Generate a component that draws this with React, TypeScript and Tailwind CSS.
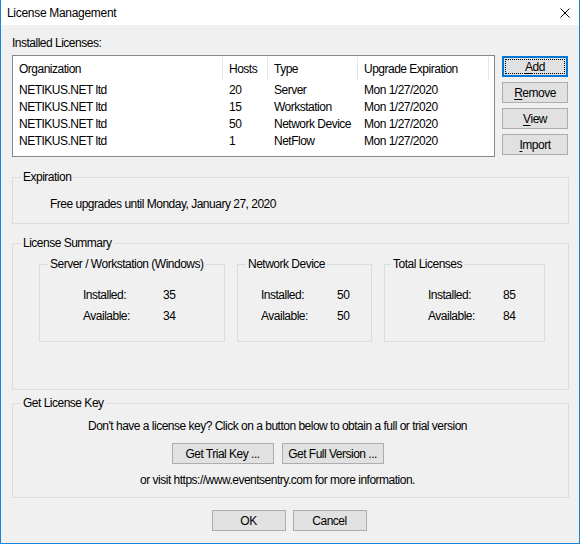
import type { ReactNode } from "react";

type BtnProps = {
  children: ReactNode;
  className?: string;
  focused?: boolean;
};

function Btn({ children, className = "", focused = false }: BtnProps) {
  if (focused) {
    return (
      <button className={`flex h-[21px] border-2 border-[#0078d7] bg-[#e1e1e1] p-px ${className}`}>
        <span className="flex flex-1 items-center justify-center border border-dotted border-black">{children}</span>
      </button>
    );
  }
  return (
    <button className={`flex h-[21px] items-center justify-center whitespace-nowrap border border-[#adadad] bg-[#e1e1e1] ${className}`}>
      {children}
    </button>
  );
}

function Key({ c }: { c: string }) {
  return <span className="underline decoration-1 underline-offset-2">{c}</span>;
}

const licenses = [
  { org: "NETIKUS.NET ltd", hosts: "20", type: "Server", exp: "Mon 1/27/2020" },
  { org: "NETIKUS.NET ltd", hosts: "15", type: "Workstation", exp: "Mon 1/27/2020" },
  { org: "NETIKUS.NET ltd", hosts: "50", type: "Network Device", exp: "Mon 1/27/2020" },
  { org: "NETIKUS.NET ltd", hosts: "1", type: "NetFlow", exp: "Mon 1/27/2020" },
];

const headers = ["Organization", "Hosts", "Type", "Upgrade Expiration"];

type Summary = {
  title: string;
  width: string;
  legendMl: string;
  pad: string;
  labelW: string;
  installed: number;
  available: number;
};

const summaries: Summary[] = [
  { title: "Server / Workstation (Windows)", width: "w-[186px]", legendMl: "ml-[8px]", pad: "pl-[43px]", labelW: "w-[80px]", installed: 35, available: 34 },
  { title: "Network Device", width: "w-[135px]", legendMl: "ml-[8px]", pad: "pl-[23px]", labelW: "w-[76px]", installed: 50, available: 50 },
  { title: "Total Licenses", width: "w-[161px]", legendMl: "ml-[6px]", pad: "pl-[43px]", labelW: "w-[75px]", installed: 85, available: 84 },
];

export default function App() {
  return (
    <div className="flex h-[544px] w-[580px] flex-col border-x border-b border-[#1883d7] bg-[#f0f0f0] text-[12px] leading-[16px] tracking-[-0.5px] text-[#000] [font-family:'Liberation_Sans',sans-serif]">
      {/* title bar */}
      <div className="flex h-[25px] shrink-0 items-center justify-between bg-white pl-[6px] pr-[9px]">
        <span className="tracking-[-0.3px]">License Management</span>
        <svg width="10" height="10" viewBox="0 0 10 10" className="text-black">
          <path d="M0.5 0.5 L9.5 9.5 M9.5 0.5 L0.5 9.5" stroke="currentColor" strokeWidth="1" />
        </svg>
      </div>

      <div className="flex flex-col px-[11px]">
        <p className="mt-[10px]">Installed Licenses:</p>

        <div className="mt-[4px] flex">
          <div className="h-[102px] w-[483px] border border-[#828790] bg-white">
            <div className="grid grid-cols-[210px_45px_90px_131px] whitespace-nowrap">
              {headers.map((h) => (
                <div key={h} className="flex h-[25px] items-center py-px">
                  <span className="flex h-full flex-1 items-center border-r border-[#e5e5e5] pl-[6px]">{h}</span>
                </div>
              ))}
              {licenses.map((l, i) => (
                <div key={i} className="contents">
                  <div className="flex h-[17px] items-center pl-[6px]">{l.org}</div>
                  <div className="flex h-[17px] items-center pl-[6px]">{l.hosts}</div>
                  <div className="flex h-[17px] items-center pl-[6px]">{l.type}</div>
                  <div className="flex h-[17px] items-center pl-[6px]">{l.exp}</div>
                </div>
              ))}
            </div>
          </div>

          <div className="ml-[7px] mt-px flex w-[66px] flex-col gap-[5px]">
            <Btn focused>
              <Key c="A" />dd
            </Btn>
            <Btn>
              <Key c="R" />emove
            </Btn>
            <Btn>
              <Key c="V" />iew
            </Btn>
            <Btn>
              <Key c="I" />mport
            </Btn>
          </div>
        </div>

        {/* Expiration */}
        <fieldset className="mt-[12px] h-[55px] w-[557px] border border-[#dcdcdc]">
          <legend className="ml-[8px] px-[2px]">Expiration</legend>
          <p className="mt-[11px] pl-[37px]">Free upgrades until Monday, January 27, 2020</p>
        </fieldset>

        {/* License Summary */}
        <fieldset className="mt-[11px] h-[155px] w-[557px] border border-[#dcdcdc]">
          <legend className="ml-[8px] px-[2px]">License Summary</legend>
          <div className="ml-[26px] mt-[5px] flex gap-[12px]">
            {summaries.map((s) => (
              <fieldset key={s.title} className={`h-[86px] border border-[#dcdcdc] ${s.width}`}>
                <legend className={`px-[2px] ${s.legendMl}`}>{s.title}</legend>
                <div className={`mt-[15px] flex flex-col gap-[5px] ${s.pad}`}>
                  <div className="flex">
                    <span className={s.labelW}>Installed:</span>
                    <span>{s.installed}</span>
                  </div>
                  <div className="flex">
                    <span className={s.labelW}>Available:</span>
                    <span>{s.available}</span>
                  </div>
                </div>
              </fieldset>
            ))}
          </div>
        </fieldset>

        {/* Get License Key */}
        <fieldset className="mt-[5px] h-[103px] w-[557px] border border-[#dcdcdc]">
          <legend className="ml-[8px] px-[2px]">Get License Key</legend>
          <div className="flex flex-col items-center pr-[26px]">
            <p className="mt-[7px]">Don't have a license key? Click on a button below to obtain a full or trial version</p>
            <div className="mt-[9px] flex gap-[8px]">
              <Btn className="w-[102px]">Get Trial Key ...</Btn>
              <Btn className="w-[102px]">Get Full Version ...</Btn>
            </div>
            <p className="mt-[8px]">or visit https://www.eventsentry.com for more information.</p>
          </div>
        </fieldset>

        <div className="mt-[12px] flex justify-center gap-[7px] pr-[2px]">
          <Btn className="w-[74px]">OK</Btn>
          <Btn className="w-[74px]">Cancel</Btn>
        </div>
      </div>
    </div>
  );
}
